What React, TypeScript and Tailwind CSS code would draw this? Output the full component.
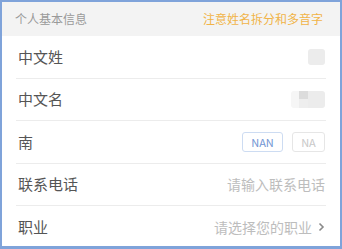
export default function App() {
  const font = { fontFamily: '"Noto Sans CJK SC", "Noto Sans", sans-serif' }
  return (
    <div className="h-[249px] w-[342px] overflow-hidden border-2 border-b-[3px] border-[#7fa3da] bg-white" style={font}>
      <div className="flex h-[34px] items-center justify-between bg-[#f3f3f3] pl-[13px] pr-[17px]">
        <span className="text-[12px] text-[#9a9a9a]">个人基本信息</span>
        <span className="text-[12px] text-[#f1b347]">注意姓名拆分和多音字</span>
      </div>
      <div className="px-[14px]">
        <Row label="中文姓">
          <div className="h-[16px] w-[17px] rounded-[3px] bg-[#ececec]" />
        </Row>
        <Row label="中文名">
          <div className="flex h-[17px] w-[34px] overflow-hidden rounded-[3px]">
            <div className="w-[8px] bg-[#f6f6f6]" />
            <div className="flex w-[9px] flex-col">
              <div className="h-1/2 bg-[#dcdcdc]" />
              <div className="h-1/2 bg-[#eeeeee]" />
            </div>
            <div className="flex-1 bg-[#ececec]" />
          </div>
        </Row>
        <Row label="南">
          <div className="flex gap-[9px]">
            <div className="flex h-[20px] w-[41px] items-center justify-center rounded-[3px] border border-[#cddcf2] text-[11px] text-[#7195d3]">NAN</div>
            <div className="flex h-[20px] w-[33px] items-center justify-center rounded-[3px] border border-[#e6e6e6] text-[11px] text-[#c8c8c8]">NA</div>
          </div>
        </Row>
        <Row label="联系电话">
          <span className="text-[14px] text-[#bdbdbd]">请输入联系电话</span>
        </Row>
        <Row label="职业" last>
          <div className="flex items-center gap-[6px]">
            <span className="text-[14px] text-[#bdbdbd]">请选择您的职业</span>
            <svg width="7" height="10" viewBox="0 0 7 10" fill="none">
              <path d="M1.5 1.5L5 5L1.5 8.5" stroke="#8a8a8a" strokeWidth="1.6" />
            </svg>
          </div>
        </Row>
      </div>
    </div>
  )
}

function Row({ label, children, last = false }: { label: string; children: React.ReactNode; last?: boolean }) {
  return (
    <div className={`flex h-[42.5px] items-center justify-between pl-[2px] pr-[1px] ${last ? '' : 'border-b border-[#ececec]'}`}>
      <span className="text-[15px] text-[#555555]">{label}</span>
      {children}
    </div>
  )
}
